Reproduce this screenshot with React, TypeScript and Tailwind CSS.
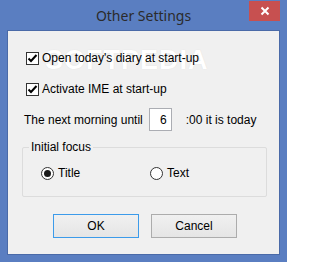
import React from "react";

function CheckBox({ label, top }: { label: string; top: string }) {
  return (
    <div className={`relative flex items-center gap-[3px] ml-[18px] ${top}`}>
      <span className="w-[13px] h-[13px] border border-[#333] bg-white flex items-center justify-center">
        <svg width="11" height="11" viewBox="0 0 11 11">
          <path d="M1.5 5.5 L4 8 L9.5 2" fill="none" stroke="#000" strokeWidth="2" />
        </svg>
      </span>
      <span className="leading-[14px]">{label}</span>
    </div>
  );
}

function Radio({ label, checked }: { label: string; checked?: boolean }) {
  return (
    <div className="flex items-center gap-[4px]">
      <span className="w-[13px] h-[13px] rounded-full border border-[#333] bg-white flex items-center justify-center">
        {checked && <span className="w-[7px] h-[7px] rounded-full bg-[#1a1a1a]" />}
      </span>
      <span className="leading-[14px]">{label}</span>
    </div>
  );
}

export default function App() {
  return (
    <div className="w-[287px] h-[262px] bg-[#5a7ec1] flex flex-col overflow-hidden">
      {/* Title bar */}
      <div className="relative h-[30px] flex items-center justify-center">
        <span className="font-['Noto_Sans',sans-serif] text-[14px] text-[#2b2b2b] mt-[1px]">
          Other Settings
        </span>
        <div className="absolute right-[7px] top-[1px] w-[31px] h-[20px] bg-[#c75050] flex items-center justify-center">
          <svg width="10" height="10" viewBox="0 0 10 10">
            <path d="M1.5 1.5 L8.5 8.5 M8.5 1.5 L1.5 8.5" stroke="#fff" strokeWidth="2" />
          </svg>
        </div>
      </div>

      {/* Client area */}
      <div className="relative mx-[7px] h-[225px] border border-[#4a6aa8] bg-[#f0f0f0] font-['Liberation_Sans',Arial,sans-serif] text-[12px] text-black flex flex-col">
        {/* watermark */}
        <span className="absolute left-[37px] top-[9px] font-['Liberation_Sans',sans-serif] font-bold text-[27px] tracking-[1px] text-white [text-shadow:0_0_1px_#d8d8d8] select-none">
          SOFTPEDIA
        </span>

        <CheckBox label="Open today's diary at start-up" top="mt-[20px]" />
        <CheckBox label="Activate IME at start-up" top="mt-[17px]" />

        <div className="flex items-center ml-[16px] mt-[12px]">
          <span>The next morning until</span>
          <span className="ml-[6px] w-[23px] h-[23px] border border-[#abadb3] bg-white flex items-center justify-end pr-[4px]">
            6
          </span>
          <span className="ml-[14px]">:00 it is today</span>
        </div>

        {/* Group box */}
        <div className="relative ml-[14px] mr-[12px] mt-[16px] h-[50px] border border-[#dcdcdc] rounded-[2px]">
          <span className="absolute left-[6px] top-[-8px] px-[2px] bg-[#f0f0f0] leading-[14px]">
            Initial focus
          </span>
          <div className="grid grid-cols-[109px_auto] items-center pl-[18px] mt-[18px]">
            <Radio label="Title" checked />
            <Radio label="Text" />
          </div>
        </div>

        <div className="flex ml-[45px] mt-[17px] gap-[12px]">
          <button className="w-[86px] h-[24px] border border-[#3c9bea] bg-gradient-to-b from-[#f0f0f0] to-[#e5e5e5] text-[12px]">
            OK
          </button>
          <button className="w-[86px] h-[24px] border border-[#acacac] bg-gradient-to-b from-[#f0f0f0] to-[#e5e5e5] text-[12px]">
            Cancel
          </button>
        </div>
      </div>
    </div>
  );
}
